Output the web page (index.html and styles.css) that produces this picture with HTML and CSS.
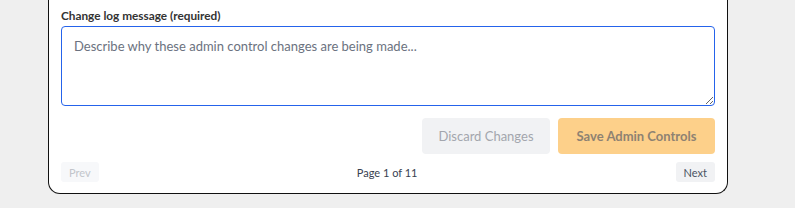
FILE: index.html
```html
<!DOCTYPE html>
<html>
<head>
  <meta name="viewport" content="width=device-width, initial-scale=1">
  <meta charset="UTF-8">
  <link rel="stylesheet" href="styles.css">
</head>
<body>
  <div class="card">
    <label class="field-label" for="changeLog">Change log message (required)</label>
    <textarea id="changeLog" class="change-log" placeholder="Describe why these admin control changes are being made..."></textarea>
    <div class="actions">
      <button class="btn btn-discard" disabled>Discard Changes</button>
      <button class="btn btn-save" disabled>Save Admin Controls</button>
    </div>
    <div class="pager">
      <button class="pager-btn" disabled>Prev</button>
      <span class="pager-info">Page 1 of 11</span>
      <button class="pager-btn pager-next">Next</button>
    </div>
  </div>
</body>
</html>
```

FILE: styles.css
```css
html, body {
  margin: 0;
  padding: 0;
}

body {
  background-color: #efefef;
  font-family: "Lato", "Open Sans", sans-serif;
  height: 208px;
}

.card {
  width: 680px;
  box-sizing: border-box;
  margin-left: 48px;
  background-color: #FFFFFF;
  border: 1.5px solid #111;
  border-top: none;
  border-radius: 0 0 12px 12px;
  padding: 8px 12px 11px 12px;
  display: flex;
  flex-direction: column;
}

.field-label {
  font-size: 11.8px;
  font-weight: 700;
  color: #333;
  line-height: 16px;
  margin-bottom: 2px;
}

.change-log {
  height: 80px;
  box-sizing: border-box;
  border: 1px solid #2563eb;
  border-radius: 4px;
  padding: 11px 12px;
  font-family: inherit;
  font-size: 13px;
  outline: none;
  resize: vertical;
}

.change-log::placeholder {
  color: #6b7280;
}

.actions {
  display: flex;
  justify-content: flex-end;
  gap: 8px;
  margin-top: 12px;
}

.btn {
  height: 36px;
  border: none;
  border-radius: 4px;
  padding: 0 16px;
  font-family: inherit;
  font-size: 13px;
  font-weight: 700;
  white-space: nowrap;
}

.btn-discard {
  background-color: #f1f2f4;
  color: #a3a6ad;
  font-weight: 400;
  width: 128px;
}

.btn-save {
  background-color: #fdd08a;
  color: #8e8272;
  width: 157px;
}

.pager {
  display: flex;
  align-items: center;
  justify-content: space-between;
  margin-top: 8px;
}

.pager-btn {
  height: 20px;
  border: none;
  border-radius: 3px;
  padding: 0 8px;
  background-color: #f7f8fa;
  color: #c2c5cb;
  font-family: inherit;
  font-size: 11px;
}

.pager-next {
  background-color: #f1f2f4;
  color: #4b5563;
}

.pager-info {
  font-size: 11px;
  color: #374151;
}
```
